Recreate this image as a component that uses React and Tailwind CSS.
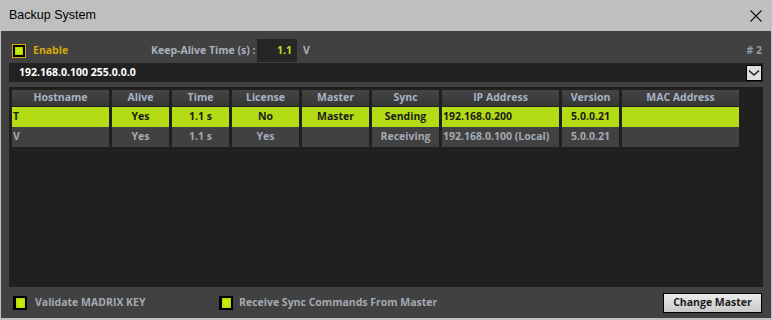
const uiFont = { fontFamily: '"Open Sans", "Liberation Sans", Arial, sans-serif' };

const columns = [
  { name: 'Hostname', w: 'w-[97px]', align: 'left' },
  { name: 'Alive', w: 'w-[57px]' },
  { name: 'Time', w: 'w-[57px]' },
  { name: 'License', w: 'w-[67px]' },
  { name: 'Master', w: 'w-[67px]' },
  { name: 'Sync', w: 'w-[67px]' },
  { name: 'IP Address', w: 'w-[117px]', align: 'left' },
  { name: 'Version', w: 'w-[57px]' },
  { name: 'MAC Address', w: 'w-[117px]' },
];

const rows = [
  { active: true, cells: ['T', 'Yes', '1.1 s', 'No', 'Master', 'Sending', '192.168.0.200', '5.0.0.21', ''] },
  { active: false, cells: ['V', 'Yes', '1.1 s', 'Yes', '', 'Receiving', '192.168.0.100 (Local)', '5.0.0.21', ''] },
];

function Check({ gold }) {
  return (
    <div
      className={`w-[14px] h-[14px] shrink-0 flex items-center justify-center bg-black ${
        gold ? 'border border-[#d9a800]' : ''
      }`}
    >
      <div className={`${gold ? 'w-[8px] h-[8px]' : 'w-[9px] h-[10px]'} bg-[#c4ec0c] shadow-[inset_0_0_2px_#8fb000]`} />
    </div>
  );
}

export default function App() {
  return (
    <div className="w-[772px] h-[320px] bg-[#c0c0c0] flex flex-col text-[10.5px]" style={uiFont}>
      {/* Title bar */}
      <div
        className="h-[31px] shrink-0 flex items-center justify-between pl-[9px] pr-[10px] bg-[#bfbfbf]"
        style={{ fontFamily: '"Liberation Sans", Arial, sans-serif' }}
      >
        <span className="text-[12.5px] text-black">Backup System</span>
        <svg width="12" height="12" viewBox="0 0 12 12">
          <path d="M0.5 0.5L11.5 11.5M11.5 0.5L0.5 11.5" stroke="#111" strokeWidth="1.1" />
        </svg>
      </div>

      {/* Body */}
      <div className="flex-1 mx-[1px] mb-[2px] bg-[#414141] flex flex-col px-[8px] font-bold">
        {/* Enable row */}
        <div className="h-[23px] mt-[8px] mb-[1px] flex items-center">
          <div className="ml-[3px]"><Check gold /></div>
          <span className="ml-[7px] w-[118px] text-[#d4a90a]">Enable</span>
          <span className="w-[106px] text-[#a9b2bc]">Keep-Alive Time (s) :</span>
          <div className="w-[40px] h-[23px] bg-[#262626] flex items-center justify-end pr-[5px] text-[#b8e01a]">1.1</div>
          <span className="ml-[6px] text-[#a9b2bc]">V</span>
          <span className="ml-auto mr-[1px] text-[#8d9aa8]"># 2</span>
        </div>

        {/* Network dropdown */}
        <div className="h-[19px] bg-[#212121] flex items-center pl-[10px] pr-[1px]">
          <span className="text-white">192.168.0.100 255.0.0.0</span>
          <div className="ml-auto w-[16px] h-[16px] bg-[#dedede] border border-black flex items-center justify-center">
            <svg width="12" height="8" viewBox="0 0 12 8">
              <path d="M1 1.5L6 6L11 1.5" fill="none" stroke="#222" strokeWidth="1.6" />
            </svg>
          </div>
        </div>

        {/* Table panel */}
        <div className="h-[200px] mt-[5px] bg-[#202020] p-[3px] flex flex-col">
          <div className="flex gap-[3px] h-[16px]">
            {columns.map((c) => (
              <div
                key={c.name}
                className={`${c.w} h-full bg-gradient-to-b from-[#454545] to-[#373737] text-[#a5b4c4] flex items-center justify-center`}
              >
                {c.name}
              </div>
            ))}
          </div>
          <div className="mt-[1px] flex flex-col">
            {rows.map((r, i) => (
              <div key={i} className="flex gap-[3px] h-[20px]">
                {columns.map((c, j) => (
                  <div
                    key={c.name}
                    className={`${c.w} h-full flex items-center ${
                      c.align === 'left' ? 'justify-start pl-[1px]' : 'justify-center'
                    } ${r.active ? 'bg-[#b4dc14] text-[#1c1c1c]' : 'bg-[#414141] text-[#a3aab2]'}`}
                  >
                    {r.cells[j]}
                  </div>
                ))}
              </div>
            ))}
          </div>
        </div>

        {/* Bottom row */}
        <div className="flex-1 flex items-center">
          <div className="ml-[4px]"><Check /></div>
          <span className="ml-[8px] w-[184px] text-[#a3aab2]">Validate MADRIX KEY</span>
          <Check />
          <span className="ml-[6px] text-[#a3aab2]">Receive Sync Commands From Master</span>
          <button className="ml-auto mr-[1px] w-[99px] h-[20px] border border-black bg-gradient-to-b from-[#ececec] to-[#c8c8c8] text-[#1a1a1a] font-bold text-[10.5px]">
            Change Master
          </button>
        </div>
      </div>
    </div>
  );
}
